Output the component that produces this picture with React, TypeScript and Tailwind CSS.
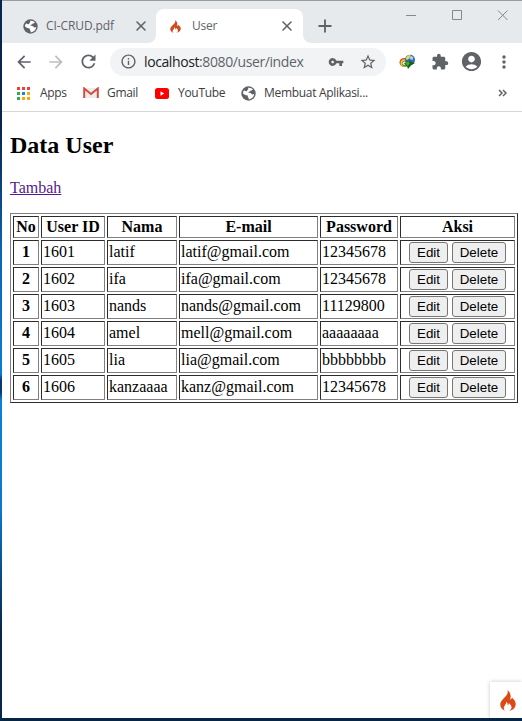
import type { ReactNode } from "react";
import { Plus, X } from "lucide-react";
import {
  MdAccountCircle,
  MdArrowBack,
  MdArrowForward,
  MdExtension,
  MdInfoOutline,
  MdMoreVert,
  MdRefresh,
  MdStarBorder,
  MdVpnKey,
} from "react-icons/md";

const users = [
  { id: "1601", name: "latif", email: "latif@gmail.com", password: "12345678" },
  { id: "1602", name: "ifa", email: "ifa@gmail.com", password: "12345678" },
  { id: "1603", name: "nands", email: "nands@gmail.com", password: "11129800" },
  { id: "1604", name: "amel", email: "mell@gmail.com", password: "aaaaaaaa" },
  { id: "1605", name: "lia", email: "lia@gmail.com", password: "bbbbbbbb" },
  { id: "1606", name: "kanzaaaa", email: "kanz@gmail.com", password: "12345678" },
];

const columns = [
  { label: "No", width: "w-[26px]" },
  { label: "User ID", width: "w-[64px]" },
  { label: "Nama", width: "w-[70px]" },
  { label: "E-mail", width: "w-[139px]" },
  { label: "Password", width: "w-[78px]" },
  { label: "Aksi", width: "w-[115px]" },
];

const cellBorder =
  "border border-t-[#2c2c2c] border-l-[#2c2c2c] border-r-[#808080] border-b-[#808080]";
const textCell = `${cellBorder} px-px pt-px pb-[2px]`;

function GlobeIcon() {
  return (
    <svg width="15" height="15" viewBox="0 0 15 15" className="shrink-0">
      <circle cx="7.500" cy="7.500" r="7.200" fill="#5f6368" />
      <path
        d="M7.200 1.700c1.900-.3 3.600.5 4.700 1.800-.6.900-1.500.9-2.200.9-.4 1.200-1.700 1-2.200 1.700-.3.700.7.800 1.700.8 1.300 0 1.300 1.300 2.300 1.600.7.200 1.200-.2 1.700-.8-.1 3-2.500 5.500-5.600 5.600v-1.600c-.9-.2-.9-1.500-.7-2.200-1.600.2-3.200-.8-5-2 .1-1.200.5-2.300 1.200-3.200.9.600 1.600 1.300 2.600.9 1-.5.300-1.600 1.500-2z"
        fill="#fff"
      />
    </svg>
  );
}

function FlameIcon({ width, height, color }: { width: number; height: number; color: string }) {
  return (
    <svg width={width} height={height} viewBox="0 0 16 21" preserveAspectRatio="none" className="shrink-0">
      <path
        d="M7.300 0c1 2.400.3 4.200-1.600 6.300C3.200 9 .4 11.200.3 14.600c-.1 2.900 1.900 5.200 4.800 6.200-1.400-1.200-1.700-2.900-.9-4.300.8-1.500 2.300-2.400 1.800-4.800 1.400.6 1.900 1.900 1.700 3.500.9-.3 1.200-1.200 1-2.200 1.700 1.200 3 2.700 2.800 4.600-.1 1.400-.9 2.500-2.200 3.200 3.400-.7 6.300-3 6.400-6.600.1-3.100-2.100-4.600-3.700-6.600-.3 1.200-.9 1.900-1.900 2.100C11.400 5.900 10.400 2.300 7.300 0z"
        fill={color}
      />
    </svg>
  );
}

function WindowControls() {
  return (
    <div className="ml-auto flex h-[29px] items-center pr-[14px]">
      <svg width="102" height="11" viewBox="0 0 102 11" fill="none" stroke="#85888b">
        <path d="M0 5.500h10M46.500 .5h9v9h-9zM92 .5l9.500 9.500M101.500 .5L92 10" />
      </svg>
    </div>
  );
}

function TabStrip() {
  return (
    <div className="flex h-[43px] items-end border-t border-[#999b9e] bg-[#e7eaed] text-[12px] text-[#5f6368]">
      <div className="flex h-[34px] w-[154px] items-center pl-[21px]">
        <GlobeIcon />
        <span className="ml-2 w-[87px] tracking-[-0.1px]">CI-CRUD.pdf</span>
        <X size={16} strokeWidth={2.4} />
      </div>
      <div className="relative flex h-[34px] w-[147px] items-center rounded-t-[8px] bg-white pl-[14px]">
        <svg className="absolute bottom-0 -left-2" width="8" height="8">
          <path d="M8 0v8H0a8 8 0 0 0 8-8z" fill="#fff" />
        </svg>
        <svg className="absolute -right-2 bottom-0" width="8" height="8">
          <path d="M0 0v8h8a8 8 0 0 1-8-8z" fill="#fff" />
        </svg>
        <FlameIcon width={11} height={13} color="#d1481a" />
        <span className="ml-[11px] w-[87px] tracking-[-0.2px]">User</span>
        <X size={16} strokeWidth={2.4} />
      </div>
      <div className="flex h-[34px] items-center pl-3">
        <Plus size={20} strokeWidth={2.2} />
      </div>
      <div className="flex flex-1 self-start">
        <WindowControls />
      </div>
    </div>
  );
}

function DownloadManagerIcon() {
  return (
    <svg width="17" height="16" viewBox="0 0 17 16">
      <ellipse cx="5.500" cy="8.500" rx="5" ry="4.500" fill="#e23b25" />
      <ellipse cx="6" cy="9" rx="4.400" ry="3.800" fill="#f8db31" />
      <ellipse cx="6.500" cy="9.500" rx="3.600" ry="2.900" fill="#3d9e35" />
      <ellipse cx="6" cy="9.300" rx="2.400" ry="1.800" fill="#e9f2ef" />
      <circle cx="11" cy="5.800" r="5" fill="#3467b0" />
      <path d="M6.800 5A4.600 4.600 0 0 1 11.500 1l-1 3.200L8 6z" fill="#e4d95a" />
      <path d="M11.500 1.500l3 1.800-1 3-3-1.500z" fill="#a9cdea" />
      <path d="M5 9.500l4.500-2.700 6.500 2.200-4 2.500-3 3.500-1-3z" fill="#14641c" />
      <path d="M6.500 9.300l3-2 1 2.500-2 2z" fill="#46ad3a" />
    </svg>
  );
}

function Toolbar() {
  return (
    <div className="flex h-[37px] items-center text-[#5f6368]">
      <div className="flex w-[108px] items-center gap-3 pl-3">
        <MdArrowBack size={20} />
        <MdArrowForward size={20} color="#bcbec0" />
        <MdRefresh size={21} />
      </div>
      <div className="flex h-[28px] w-[276px] items-center rounded-full bg-[#f1f3f4] pl-[10px]">
        <MdInfoOutline size={17} />
        <span className="ml-[7px] w-[184px] text-[14px] tracking-[-0.4px] whitespace-nowrap">
          <span className="text-[#202124]">localhost</span>:8080/user/index
        </span>
        <MdVpnKey size={16} />
        <MdStarBorder size={18} className="ml-[15px]" />
      </div>
      <div className="flex items-center pl-[13px]">
        <DownloadManagerIcon />
        <MdExtension size={18} className="ml-[15px]" />
        <MdAccountCircle size={23} className="ml-[11px]" />
        <MdMoreVert size={20} className="ml-[11px]" />
      </div>
    </div>
  );
}

const appColors = [
  "bg-[#ea4335]", "bg-[#ea4335]", "bg-[#ea4335]",
  "bg-[#34a853]", "bg-[#1a82e8]", "bg-[#f9ab00]",
  "bg-[#34a853]", "bg-[#f9ab00]", "bg-[#f9ab00]",
];

function Bookmark({ icon, label, className }: { icon: ReactNode; label: string; className: string }) {
  return (
    <div className={`flex items-center whitespace-nowrap ${className}`}>
      {icon}
      <span>{label}</span>
    </div>
  );
}

function BookmarksBar() {
  return (
    <div className="flex h-[32px] items-center border-b border-[#d5d7d9] pb-[5px] pl-[15px] text-[12px] tracking-[-0.3px] text-[#3c4043]">
      <Bookmark
        className="w-[66px] gap-[10px]"
        label="Apps"
        icon={
          <div className="grid grid-cols-[3px_3px_3px] gap-[2px]">
            {appColors.map((color, i) => (
              <i key={i} className={`h-[3px] w-[3px] ${color}`} />
            ))}
          </div>
        }
      />
      <Bookmark
        className="w-[72px] gap-2"
        label="Gmail"
        icon={
          <svg width="16" height="12" viewBox="0 0 16 12">
            <path d="M1 1h14v10H1z" fill="#ececec" />
            <path d="M1.200 11V1.500L8 7l6.800-5.500V11" fill="none" stroke="#d54b3d" strokeWidth="2" />
          </svg>
        }
      />
      <Bookmark
        className="w-[86px] gap-[9px]"
        label="YouTube"
        icon={
          <svg width="14" height="11" viewBox="0 0 14 11">
            <rect width="14" height="11" rx="2.500" fill="#f00" />
            <path d="M5.500 3.300v4.400l3.700-2.200z" fill="#fff" />
          </svg>
        }
      />
      <Bookmark className="w-[257px] gap-2" label="Membuat Aplikasi..." icon={<GlobeIcon />} />
      <svg width="9" height="8" viewBox="0 0 9 8" fill="none" stroke="#5f6368" strokeWidth="1.500">
        <path d="M1 1l3 3-3 3M5 1l3 3-3 3" />
      </svg>
    </div>
  );
}

function ActionButton({ label, width }: { label: string; width: string }) {
  return (
    <button
      className={`h-[21px] rounded-[3px] border border-[#767676] bg-[#efefef] text-center font-['Liberation_Sans',Arial,sans-serif] text-[13.333px] leading-[19px] text-black ${width}`}
    >
      {label}
    </button>
  );
}

function UserTable() {
  return (
    <table className="mt-[15px] w-[508px] table-fixed border-separate border-spacing-[2px] border border-t-[#808080] border-r-[#2c2c2c] border-b-[#2c2c2c] border-l-[#808080] text-[16px] leading-[18px]">
      <thead>
        <tr className="h-[22px]">
          {columns.map((column) => (
            <th key={column.label} className={`${cellBorder} p-px ${column.width}`}>
              {column.label}
            </th>
          ))}
        </tr>
      </thead>
      <tbody>
        {users.map((user, index) => (
          <tr key={user.id} className="h-[25px]">
            <th className={textCell}>{index + 1}</th>
            <td className={textCell}>{user.id}</td>
            <td className={textCell}>{user.name}</td>
            <td className={textCell}>{user.email}</td>
            <td className={textCell}>{user.password}</td>
            <td className={`${cellBorder} p-px`}>
              <div className="flex justify-center gap-1">
                <ActionButton label="Edit" width="w-[39px]" />
                <ActionButton label="Delete" width="w-[54px]" />
              </div>
            </td>
          </tr>
        ))}
      </tbody>
    </table>
  );
}

export default function App() {
  return (
    <div className="flex h-[721px] w-[522px] overflow-hidden bg-[#052544] font-['Open_Sans','Noto_Sans',sans-serif]">
      <div className="w-[2px] shrink-0 bg-[linear-gradient(#08264d_0px,#08264d_130px,#0b64b4_250px,#0a7cd6_374px,#083a70_380px,#083a70_392px,#0a80dc_400px,#0a78d0_510px,#07264c_630px)]" />
      <div className="relative flex h-[718px] w-[520px] flex-col overflow-hidden bg-white">
        <TabStrip />
        <Toolbar />
        <BookmarksBar />
        <main className="flex-1 pl-2 font-['Liberation_Serif','Times_New_Roman',serif] text-black">
          <h2 className="mt-[20px] text-[24px] leading-[27px] font-bold">Data User</h2>
          <p className="mt-[19px] text-[16px] leading-[20px]">
            <a className="text-[#551a8b] underline" href="#tambah">Tambah</a>
          </p>
          <UserTable />
        </main>
        <div className="absolute right-0 bottom-0 flex h-[36px] w-[32px] items-center justify-center bg-white pl-[3px] shadow-[0_0_4px_rgba(0,0,0,0.22)]">
          <FlameIcon width={16} height={21} color="#dd4814" />
        </div>
      </div>
    </div>
  );
}
